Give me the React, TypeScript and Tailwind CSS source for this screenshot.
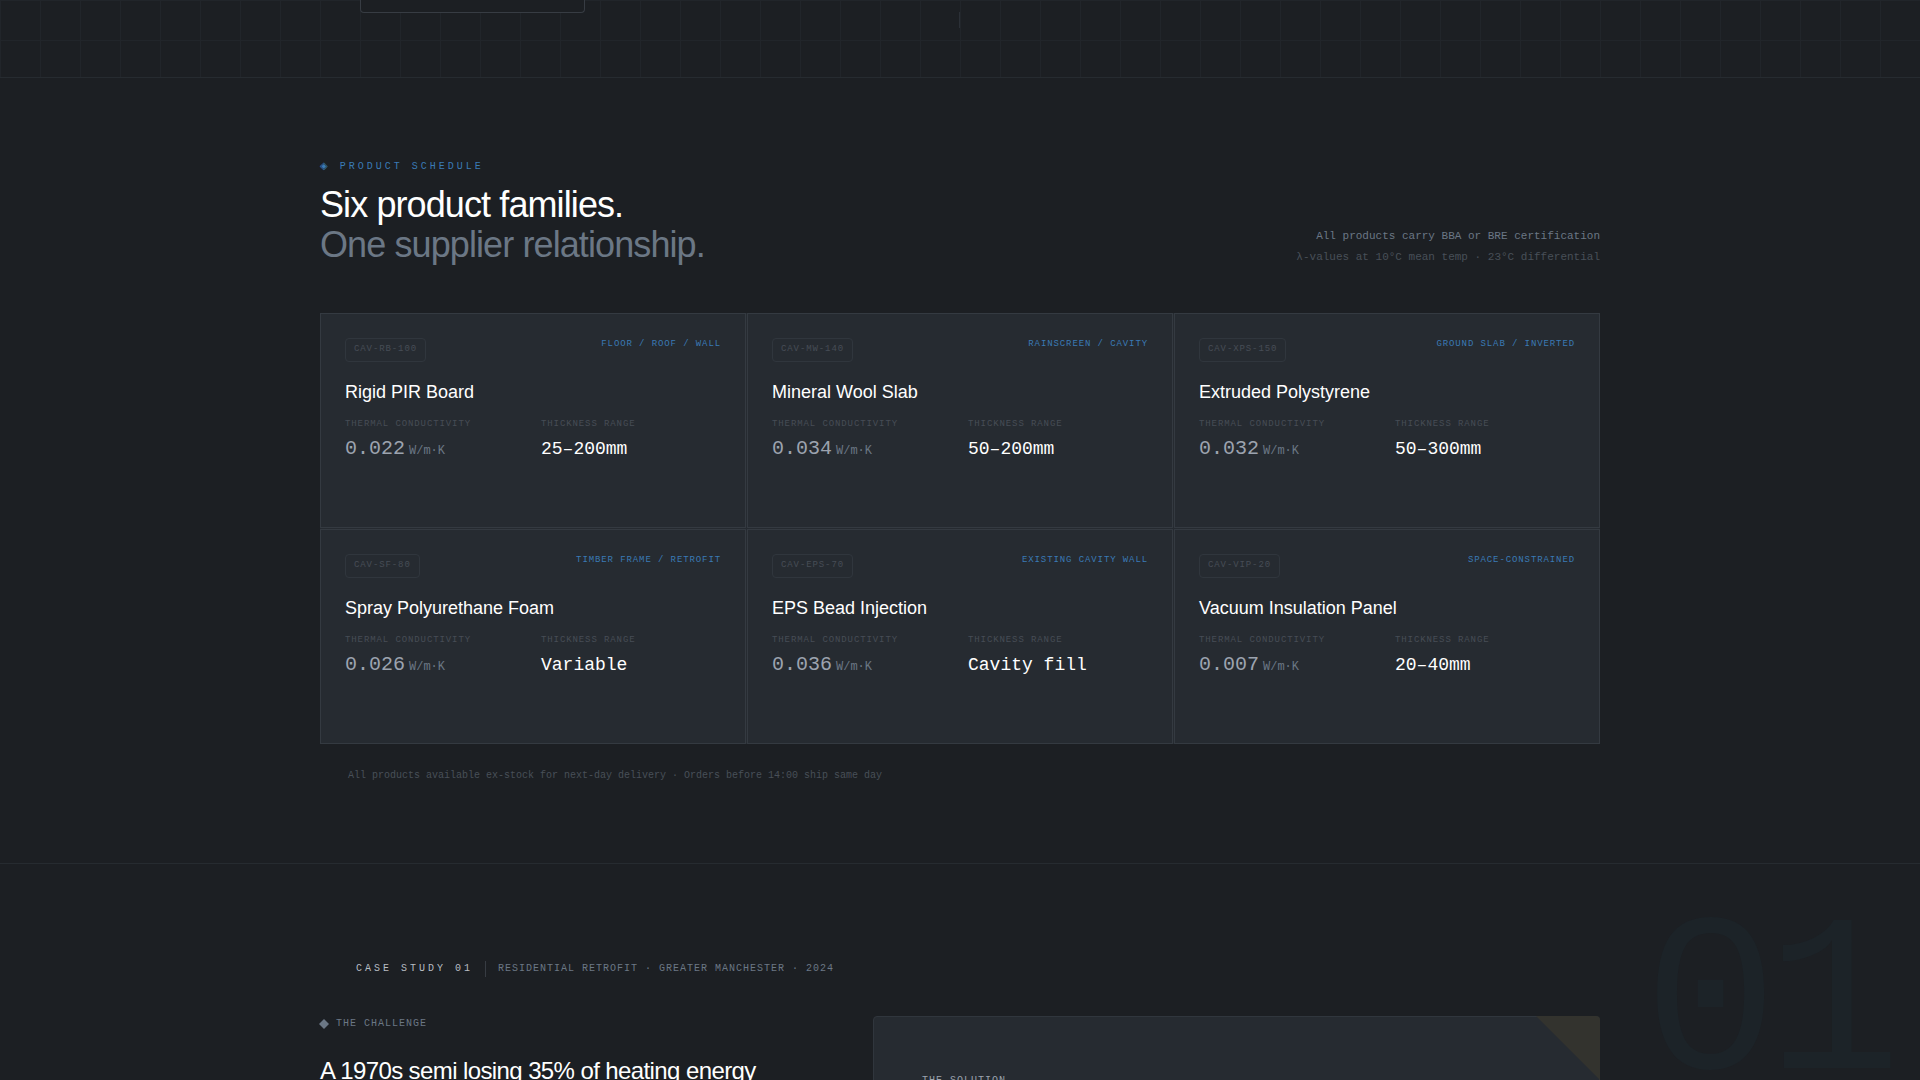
const MONO = "font-['Liberation_Mono',monospace]"

type Product = {
  code: string
  use: string
  name: string
  lambda: string
  thickness: string
}

const products: Product[] = [
  { code: 'CAV-RB-100', use: 'FLOOR / ROOF / WALL', name: 'Rigid PIR Board', lambda: '0.022', thickness: '25–200mm' },
  { code: 'CAV-MW-140', use: 'RAINSCREEN / CAVITY', name: 'Mineral Wool Slab', lambda: '0.034', thickness: '50–200mm' },
  { code: 'CAV-XPS-150', use: 'GROUND SLAB / INVERTED', name: 'Extruded Polystyrene', lambda: '0.032', thickness: '50–300mm' },
  { code: 'CAV-SF-80', use: 'TIMBER FRAME / RETROFIT', name: 'Spray Polyurethane Foam', lambda: '0.026', thickness: 'Variable' },
  { code: 'CAV-EPS-70', use: 'EXISTING CAVITY WALL', name: 'EPS Bead Injection', lambda: '0.036', thickness: 'Cavity fill' },
  { code: 'CAV-VIP-20', use: 'SPACE-CONSTRAINED', name: 'Vacuum Insulation Panel', lambda: '0.007', thickness: '20–40mm' },
]

function HeroTail() {
  return (
    <section className="h-[78px] border-b border-[#262b30] bg-[linear-gradient(#21252a_1px,transparent_1px),linear-gradient(90deg,#21252a_1px,transparent_1px)] bg-[size:40px_40px]">
      <div className="mx-auto flex max-w-7xl px-10">
        <div className="h-[13px] w-[225px] rounded-b-sm border border-t-0 border-[#373c43] bg-[#1c1f23]" />
        <div className="mt-3 ml-[374px] h-4 w-px bg-[#2b3037]" />
      </div>
    </section>
  )
}

function ProductCard({ product }: { product: Product }) {
  return (
    <article className="h-[215px] border border-[#343a41] bg-[#262b31] p-6">
      <div className="mb-4 flex items-start justify-between">
        <span className="rounded-sm border border-[#30363d] px-2 pt-1 pb-1.5 text-[9px] leading-3 tracking-[0.9px] text-[#464d56]">
          {product.code}
        </span>
        <span className="text-[9px] leading-3 tracking-[0.9px] text-[#3a7ab5]">{product.use}</span>
      </div>
      <h3 className="mb-3 font-['Liberation_Sans',sans-serif] text-lg leading-7 text-white">{product.name}</h3>
      <dl className="grid grid-cols-2 gap-4">
        <div>
          <dt className="text-[9px] leading-3 tracking-[0.9px] text-[#464d56]">THERMAL CONDUCTIVITY</dt>
          <dd className="mt-[5px] text-xl leading-7 text-[#9ca3af]">
            {product.lambda}
            <span className="ml-1 text-xs text-[#6b7785]">W/m·K</span>
          </dd>
        </div>
        <div>
          <dt className="text-[9px] leading-3 tracking-[0.9px] text-[#464d56]">THICKNESS RANGE</dt>
          <dd className="mt-[5px] text-lg leading-7 text-white">{product.thickness}</dd>
        </div>
      </dl>
    </article>
  )
}

function Products() {
  return (
    <section className="border-b border-[#262b30] pt-20 pb-[79px]">
      <div className="mx-auto max-w-7xl">
        <header className="mb-12 flex items-end justify-between">
          <div>
            <p className="mb-[11px] h-4 text-[10px] leading-4 tracking-[3px] text-[#3a7ab5]">
              <span className="font-['DejaVu_Sans',sans-serif]">◈</span> PRODUCT SCHEDULE
            </p>
            <h2 className="font-['Liberation_Sans',sans-serif] text-4xl leading-10 tracking-tight text-white">
              Six product families.
              <br />
              <span className="text-[#6b7785]">One supplier relationship.</span>
            </h2>
          </div>
          <div className="text-right text-[11px] leading-4 text-[#6b7785]">
            <p>All products carry BBA or BRE certification</p>
            <p className="mt-[5px] text-[#484f58]">λ-values at 10°C mean temp · 23°C differential</p>
          </div>
        </header>
        <div className="grid grid-cols-3 gap-px bg-[#262b31]">
          {products.map((product) => (
            <ProductCard key={product.code} product={product} />
          ))}
        </div>
        <p className="mt-6 px-7 text-[10px] leading-4 text-[#484f58]">
          All products available ex-stock for next-day delivery · Orders before 14:00 ship same day
        </p>
      </div>
    </section>
  )
}

function CaseStudy() {
  return (
    <section className="relative overflow-hidden pt-[97px]">
      {/* oversized section number */}
      <span className="pointer-events-none absolute top-[33px] right-[30px] text-[224px] leading-none tracking-tighter text-[#1c2328]" aria-hidden="true">
        01
      </span>
      <div className="relative mx-auto max-w-7xl">
        <div className="mb-[39px] flex items-center px-9 text-[10px] leading-4">
          <span className="tracking-[3px] text-[#b8bdc4]">CASE STUDY 01</span>
          <span className="mx-3 h-4 w-px bg-[#373c43]" />
          <span className="tracking-[1px] text-[#6b7785]">RESIDENTIAL RETROFIT · GREATER MANCHESTER · 2024</span>
        </div>
        <div className="flex gap-16">
          <div className="flex-1">
            <p className="mb-[23px] flex items-center gap-2 text-[10px] leading-4 tracking-[1px] text-[#6b7785]">
              <svg viewBox="0 0 8 8" className="size-2 overflow-visible fill-[#6b7785]">
                <path d="M4 -1 9 4 4 9 -1 4Z" />
              </svg>
              THE CHALLENGE
            </p>
            <h3 className="font-['Liberation_Sans',sans-serif] text-2xl leading-8 tracking-tight text-white">
              A 1970s semi losing 35% of heating energy through uninsulated cavity walls
            </h3>
          </div>
          <div className="relative w-[727px] rounded-sm border border-[#30363d] bg-[#262b31] p-12">
            <svg viewBox="0 0 64 64" className="absolute -top-px -right-px size-16 rounded-tr-sm fill-[#33332e]">
              <path d="M0 0H64V64Z" />
            </svg>
            <p className="pt-2 text-[10px] leading-4 tracking-[1px] text-[#9ca3af]">THE SOLUTION</p>
          </div>
        </div>
      </div>
    </section>
  )
}

export default function App() {
  return (
    <main className={`h-screen overflow-hidden bg-[#1c1f23] ${MONO}`}>
      <HeroTail />
      <Products />
      <CaseStudy />
    </main>
  )
}
